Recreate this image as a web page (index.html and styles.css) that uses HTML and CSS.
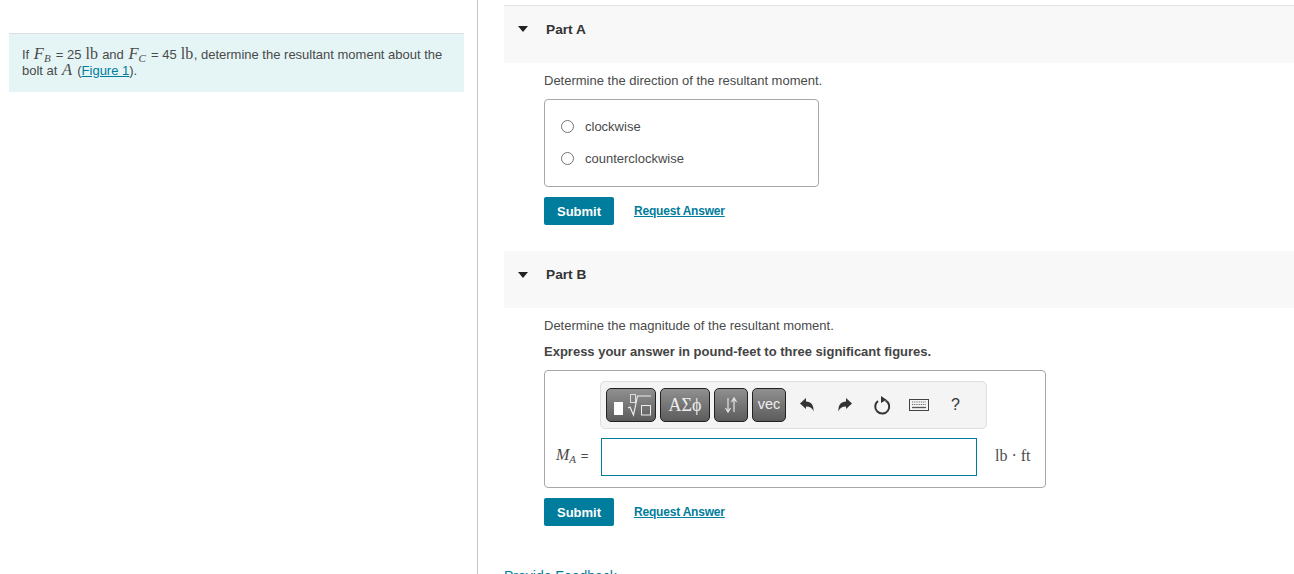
FILE: index.html
```html
<!DOCTYPE html>
<html lang="en">
<head>
<meta charset="utf-8">
<title>Resultant moment</title>
<link rel="stylesheet" href="styles.css">
</head>
<body>
<div class="page">
  <aside class="left">
    <div class="intro">
      <p>If <span class="m">F<sub>B</sub></span> = 25 <span class="u">lb</span> and <span class="m">F<sub>C</sub></span> = 45 <span class="u">lb</span>, determine the resultant moment about the<br>bolt at <span class="m">A</span> (<a href="#">Figure 1</a>).</p>
    </div>
  </aside>
  <main class="right">
    <section class="part first">
      <header class="part-head"><span class="caret"></span><h2>Part A</h2></header>
      <div class="part-body">
        <p class="prompt">Determine the direction of the resultant moment.</p>
        <div class="choices">
          <label class="choice"><span class="radio"></span>clockwise</label>
          <label class="choice"><span class="radio"></span>counterclockwise</label>
        </div>
        <div class="actions"><button class="submit">Submit</button><a class="req" href="#">Request Answer</a></div>
      </div>
    </section>
    <section class="part second">
      <header class="part-head"><span class="caret"></span><h2>Part B</h2></header>
      <div class="part-body">
        <p class="prompt">Determine the magnitude of the resultant moment.</p>
        <p class="express">Express your answer in pound-feet to three significant figures.</p>
        <div class="answer">
          <div class="toolbar">
            <button class="tb tb-tmpl" aria-label="templates">
              <svg width="44" height="28" viewBox="0 0 44 28"><rect x="5" y="11" width="9" height="13" fill="#fff"/><rect x="21.500" y="3.500" width="5" height="8" fill="none" stroke="#ddd"/><path d="M19 17l2-1 3.500 8 4-19h13.500" fill="none" stroke="#eee" stroke-width="1.200"/><rect x="32.500" y="14.500" width="9" height="9.500" fill="none" stroke="#eee"/></svg>
            </button>
            <button class="tb tb-greek">ΑΣϕ</button>
            <button class="tb tb-arrows" aria-label="subscript superscript"><svg width="14" height="18" viewBox="0 0 14 18"><path d="M4 2v13M1.500 12l2.500 4 2.500-4M10 16V3M7.500 6L10 2l2.500 4" fill="none" stroke="#e4e4e4" stroke-width="1.200"/></svg></button>
            <button class="tb tb-vec">vec</button>
            <div class="tools">
              <svg class="ic" width="16" height="16" viewBox="0 0 16 16"><path d="M1 6.500L7 1v3.500c5 0 8 3.500 7.500 10-1-3.500-3.500-5-7.500-5V12z" fill="#333"/></svg>
              <svg class="ic" width="16" height="16" viewBox="0 0 16 16"><path d="M15 6.500L9 1v3.500c-5 0-8 3.500-7.500 10 1-3.500 3.500-5 7.500-5V12z" fill="#333"/></svg>
              <svg class="ic" width="18" height="20" viewBox="0 0 18 20"><path d="M5 6a7 7 0 1 0 7.500-.6" fill="none" stroke="#333" stroke-width="2"/><path d="M8 1l5.500 3.700L8 8z" fill="#333"/></svg>
              <svg class="ic" width="20" height="14" viewBox="0 0 20 14"><rect x=".5" y="1.500" width="19" height="11" fill="#f4f4f4" stroke="#444"/><path d="M3 4h14M3 6.500h14" stroke="#666" stroke-width="1.200" stroke-dasharray="1 .8"/><path d="M3 9.500h14" stroke="#555" stroke-width="1.300"/></svg>
              <span class="help">?</span>
            </div>
          </div>
          <div class="entry">
            <span class="label"><span class="m big">M<sub>A</sub></span> =</span>
            <input class="field" type="text" aria-label="answer">
            <span class="unit">lb · ft</span>
          </div>
        </div>
        <div class="actions"><button class="submit">Submit</button><a class="req" href="#">Request Answer</a></div>
      </div>
    </section>
    <a class="feedback" href="#">Provide Feedback</a>
  </main>
</div>
</body>
</html>
```
FILE: styles.css
```css
* { box-sizing: border-box; }
html, body { margin: 0; height: 574px; overflow: hidden; background: #fff; }
body { font-family: "Liberation Sans", Arial, sans-serif; font-size: 13px; color: #4a4a4a; }
a { color: #007c9c; }
p { margin: 0; }
.page { display: flex; height: 574px; }
.left { width: 478px; flex: none; border-right: 1px solid #c8c8c8; padding: 33px 13px 0 9px; }
.intro { height: 59px; background: #e5f5f6; border-top: 1px solid #d9dfe0; padding: 13px 13px; line-height: 16px; font-size: 13px; }
.m { font-family: "Liberation Serif", serif; font-style: italic; font-size: 16.500px; line-height: 0; padding: 0 1.500px 0 1px; }
.u { font-family: "Liberation Serif", serif; font-size: 16px; line-height: 0; padding: 0 .5px; }
sub { font-size: 11px; line-height: 0; vertical-align: -3px; }
.right { flex: 1; min-width: 0; padding: 5px 0 0 26px; }
.part-head { height: 57px; background: #f8f8f8; display: flex; align-items: flex-start; padding: 16px 0 0 14px; }
.first .part-head { height: 58px; border-top: 1px solid #e2e2e2; }
.caret { width: 0; height: 0; border: 5.500px solid transparent; border-top: 6px solid #222; border-bottom: 0; margin: 5px 18px 0 0; }
.first .caret { margin-top: 4px; }
h2 { margin: 0; font-size: 13.700px; line-height: 15px; font-weight: bold; color: #333; }
.part-body { padding: 11px 0 0 40px; }
.prompt { line-height: 14px; height: 14px; font-size: 13px; }
.choices { width: 275px; height: 88px; margin-top: 11px; border: 1px solid #a8a8a8; border-radius: 4px; padding: 10px 16px; }
.choice { display: flex; align-items: center; height: 32px; gap: 11px; font-size: 13px; }
.radio { width: 13px; height: 13px; border: 1px solid #777; border-radius: 50%; background: #fff; }
.actions { display: flex; align-items: center; margin-top: 10px; gap: 20px; }
.submit { width: 70px; height: 28px; border: 0; border-radius: 2px; background: #007c9c; color: #fff; font: bold 13px "Liberation Sans", Arial, sans-serif; padding: 0; }
.req { font-size: 12px; font-weight: bold; letter-spacing: -.2px; }
.second { margin-top: 26px; }
.express { margin-top: 12px; line-height: 14px; font-size: 13px; font-weight: bold; color: #444; }
.answer { width: 502px; height: 118px; margin-top: 11px; border: 1px solid #a8a8a8; border-radius: 4px; padding: 10px 0 0 55px; }
.toolbar { width: 387px; height: 48px; background: #f4f4f4; border: 1px solid #dedede; border-radius: 5px; display: flex; align-items: center; padding: 0 0 0 5px; gap: 4px; }
.tb { height: 34px; padding: 0; border: 1px solid #222; border-radius: 5px; background: linear-gradient(#909090, #5c5c5c); color: #eee; display: flex; align-items: center; justify-content: center; }
.tb-tmpl { width: 50px; }
.tb-greek { width: 50px; font: 18px "Liberation Serif", serif; }
.tb-arrows { width: 34px; }
.tb-vec { width: 34px; font: 14.500px "Liberation Sans", Arial, sans-serif; padding-bottom: 2px; }
.tools { display: flex; align-items: center; margin-left: 9px; }
.ic { flex: none; }
.ic:nth-child(1) { margin-right: 22px; }
.ic:nth-child(2) { margin-right: 20px; }
.ic:nth-child(3) { margin-right: 18px; }
.ic:nth-child(4) { margin-right: 22px; }
.help { font-size: 16px; color: #333; }
.entry { display: flex; align-items: center; margin: 9px 0 0 -44px; }
.label { width: 45px; font-size: 13px; white-space: nowrap; padding-bottom: 3px; }
.big { font-size: 16px; margin-right: 1px; padding: 0; }
.field { width: 376px; height: 38px; border: 1px solid #007c9c; background: #fff; padding: 0; }
.unit { margin-left: 18px; font: 16px "Liberation Serif", serif; white-space: nowrap; padding-bottom: 3px; }
.feedback { display: block; margin-top: 42px; font-size: 14px; text-decoration: none; }
```
